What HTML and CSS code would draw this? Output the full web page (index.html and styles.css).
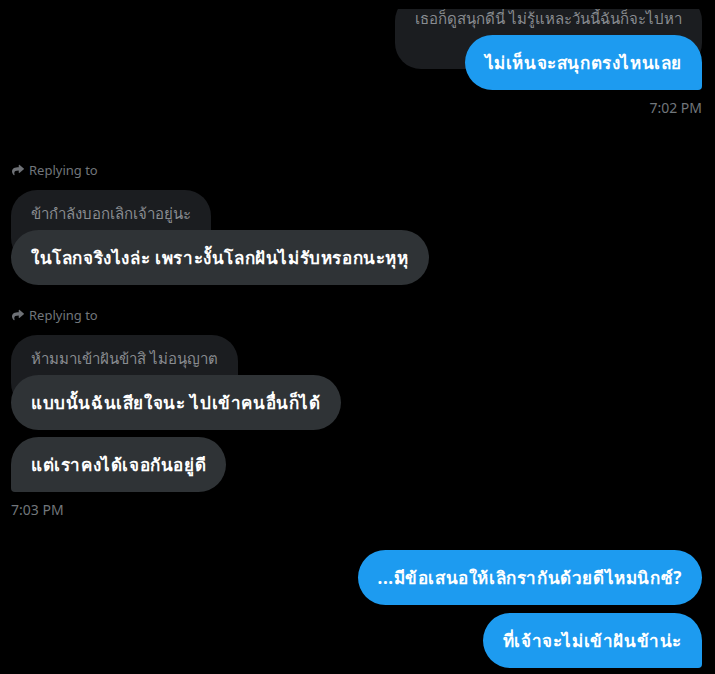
FILE: index.html
```html
<!DOCTYPE html>
<html lang="th">
<head>
<meta charset="utf-8">
<title>DM</title>
<link rel="stylesheet" href="styles.css">
</head>
<body>
<div class="top-gap"></div>
<main class="thread">
  <section class="group out first">
    <div class="quote-stack">
      <div class="quoted">เธอก็ดูสนุกดีนี่ ไม่รู้แหละวันนี้ฉันก็จะไปหา</div>
      <div class="bubble blue tail-out">ไม่เห็นจะสนุกตรงไหนเลย</div>
    </div>
    <div class="time">7:02 PM</div>
  </section>

  <section class="group in g2">
    <div class="reply-label">
      <svg class="reply-icon" viewBox="0 0 512 512" aria-hidden="true"><path d="M503.7 189.8L327.7 37.9C312.3 24.5 288 35.3 288 56v80.1C127.4 137.9 0 170.1 0 322.3c0 61.4 39.6 122.3 83.3 154.1 13.7 9.9 33.1-2.5 28.1-18.6C66.1 312.8 132.9 274.3 288 272.1V360c0 20.7 24.3 31.5 39.700 18.2l176-152c11.1-9.6 11.1-26.8 0-36.4z"/></svg>
      <span>Replying to</span>
    </div>
    <div class="quote-stack">
      <div class="quoted">ข้ากำลังบอกเลิกเจ้าอยู่นะ</div>
      <div class="bubble dark">ในโลกจริงไงล่ะ เพราะงั้นโลกฝันไม่รับหรอกนะหุหุ</div>
    </div>
  </section>

  <section class="group in g3">
    <div class="reply-label">
      <svg class="reply-icon" viewBox="0 0 512 512" aria-hidden="true"><path d="M503.7 189.8L327.7 37.9C312.3 24.5 288 35.3 288 56v80.1C127.4 137.9 0 170.1 0 322.3c0 61.4 39.6 122.3 83.3 154.1 13.7 9.9 33.1-2.5 28.1-18.6C66.1 312.8 132.9 274.3 288 272.1V360c0 20.7 24.3 31.5 39.7 18.2l176-152c11.1-9.6 11.1-26.8 0-36.4z"/></svg>
      <span>Replying to</span>
    </div>
    <div class="quote-stack">
      <div class="quoted">ห้ามมาเข้าฝันข้าสิ ไม่อนุญาต</div>
      <div class="bubble dark">แบบนั้นฉันเสียใจนะ ไปเข้าคนอื่นก็ได้</div>
    </div>
    <div class="bubble dark next tail-in">แต่เราคงได้เจอกันอยู่ดี</div>
    <div class="time">7:03 PM</div>
  </section>

  <section class="group out g4">
    <div class="bubble blue">...มีข้อเสนอให้เลิกรากันด้วยดีไหมนิกซ์?</div>
    <div class="bubble blue next tail-out">ที่เจ้าจะไม่เข้าฝันข้าน่ะ</div>
  </section>
</main>
</body>
</html>
```

FILE: styles.css
```css
html, body {
  margin: 0;
  padding: 0;
  background: #000;
}

body {
  width: 715px;
  height: 674px;
  overflow: hidden;
  font-family: "Noto Sans", "Open Sans", sans-serif;
}

.top-gap {
  height: 9px;
}

.thread {
  height: 665px;
  overflow: hidden;
  padding: 0 13px 0 11px;
  display: flex;
  flex-direction: column;
}

.group {
  display: flex;
  flex-direction: column;
}

.group.in {
  align-items: flex-start;
}

.group.out {
  align-items: flex-end;
}

.group.first {
  margin-top: -14px;
}

.group.g2 {
  margin-top: 44px;
}

.group.g3 {
  margin-top: 21px;
}

.group.g4 {
  margin-top: 31px;
}

.quote-stack {
  display: flex;
  flex-direction: column;
}

.out .quote-stack {
  align-items: flex-end;
}

.in .quote-stack {
  align-items: flex-start;
}

.quoted {
  background: #1b1d20;
  color: #898c90;
  font-size: 15px;
  line-height: 20px;
  padding: 13px 20px 41px;
  border-radius: 26px;
  white-space: nowrap;
}

.bubble {
  position: relative;
  font-size: 17px;
  letter-spacing: 0.6px;
  font-weight: bold;
  line-height: 23px;
  padding: 16px 20px;
  border-radius: 28px;
  color: #fff;
  white-space: nowrap;
}

.quote-stack .bubble {
  margin-top: -34px;
}

.bubble.next {
  margin-top: 7px;
}

.group.out .bubble.next {
  margin-top: 8px;
}

.bubble.blue {
  background: #1d9bf0;
}

.bubble.dark {
  background: #2f3336;
}

.tail-out {
  border-bottom-right-radius: 4px;
}

.tail-in {
  border-bottom-left-radius: 4px;
}

.time {
  margin-top: 9px;
  font-size: 14px;
  line-height: 18px;
  color: #71767b;
}

.reply-label {
  display: flex;
  align-items: center;
  gap: 5px;
  height: 18px;
  margin-bottom: 11px;
  padding-left: 1px;
  font-size: 13px;
  color: #71767b;
}

.reply-icon {
  width: 12px;
  height: 12px;
  fill: #6e7176;
}
```
